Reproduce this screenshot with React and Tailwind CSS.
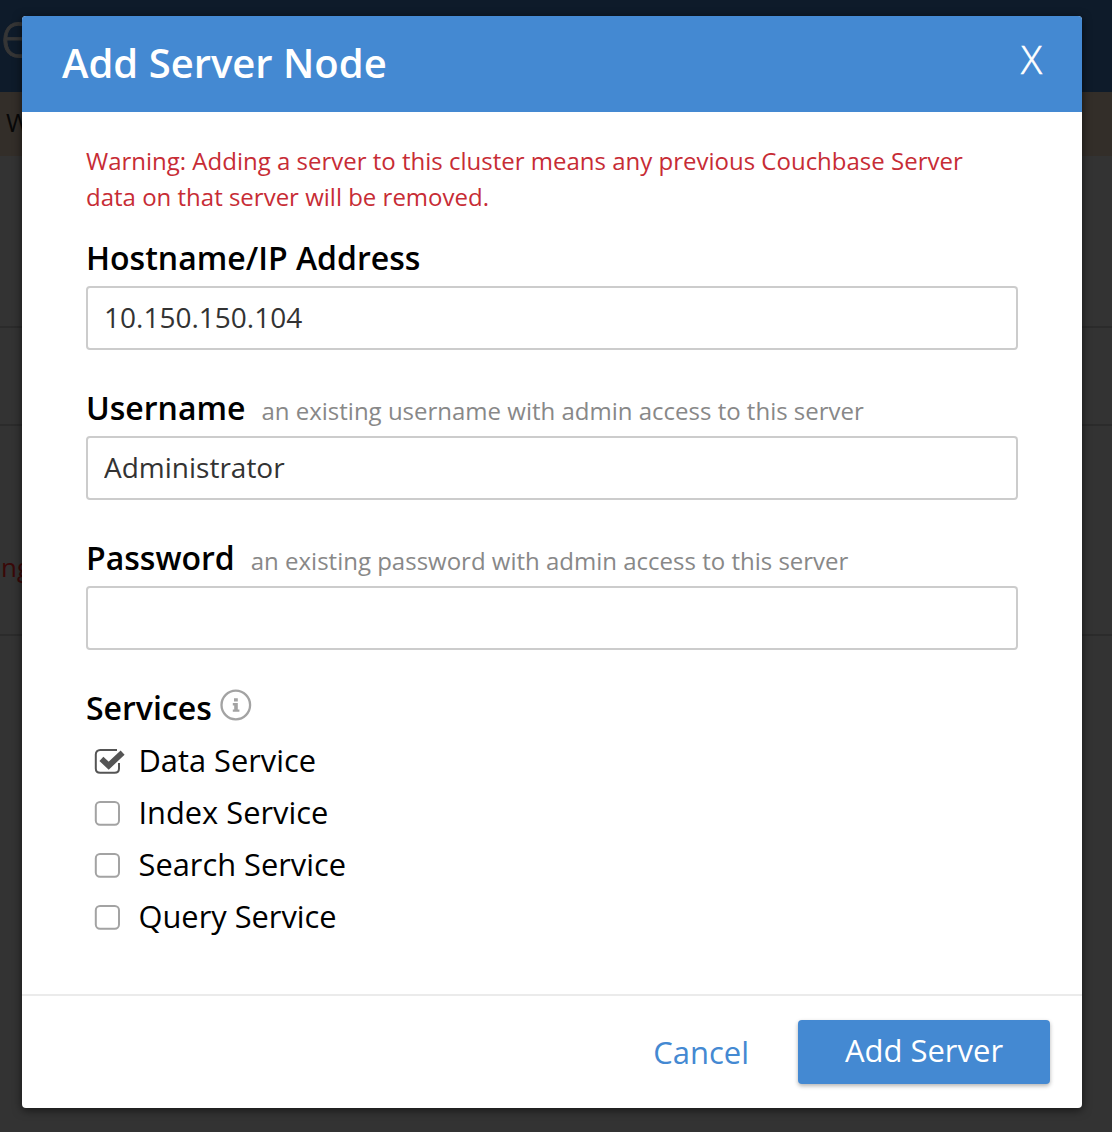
import React from 'react';

function Backdrop() {
  return (
    <div className="absolute inset-0 flex flex-col overflow-hidden bg-[#333333]" aria-hidden="true">
      <div className="h-[92px] shrink-0 bg-[#0e1b2a] text-[64px] leading-[65px] font-light text-[#363636] [-webkit-text-stroke:0.8px_#363636]">e</div>
      <div className="h-16 shrink-0 bg-[#332e29] pl-[6px] text-[26px] leading-[61px] text-[#080808]">W</div>
      <div className="h-[172px] shrink-0 border-b-2 border-[#2b2b2b]" />
      <div className="h-[98px] shrink-0 border-b-2 border-[#2b2b2b]" />
      <div className="h-[210px] shrink-0 border-b-2 border-[#2b2b2b] pt-[123px] pl-px text-[26px] leading-[36px] text-[#3a0808]">ng</div>
    </div>
  );
}

function Field({ label, hint, value, type = 'text' }) {
  return (
    <label className="block h-[150px]">
      <span className="flex h-[50px] items-baseline gap-4 leading-[44px]">
        <span className="text-[32px] font-semibold text-black">{label}</span>
        {hint && <span className="text-2xl leading-none text-[#888888]">{hint}</span>}
      </span>
      <input
        type={type}
        defaultValue={value}
        className="block h-16 w-full rounded-[4px] border-2 border-[#cccccc] bg-white px-4 pb-[3px] text-[28px] text-[#333333] outline-none"
      />
    </label>
  );
}

function InfoIcon() {
  return (
    <svg width="32" height="32" viewBox="0 0 32 32" fill="none" className="mt-[-6px]">
      <circle cx="15.8" cy="16" r="14.3" stroke="#a3a3a3" strokeWidth="2.3" />
      <path d="M14 9.2h3.8v3.3H14zM12.8 14h5v6.4h1.6v2.4h-6.6v-2.4h1.4v-4h-1.4z" fill="#a3a3a3" />
    </svg>
  );
}

function CheckIcon({ checked }) {
  return checked ? (
    <svg width="32" height="30" viewBox="0 0 32 30" fill="none">
      <path d="M24 3H7.2C4.5 3 2.8 4.8 2.8 7.4v14C2.8 24 4.5 25.7 7.2 25.7h14.4C24.2 25.7 26 24 26 21.4V16" stroke="#555555" strokeWidth="2" />
      <path d="M8.4 11.9l7.3 6.8L29.6 5.6" stroke="#555555" strokeWidth="5.8" />
    </svg>
  ) : (
    <svg width="32" height="30" viewBox="0 0 32 30" fill="none">
      <rect x="2.8" y="3" width="23.2" height="22.8" rx="4.2" stroke="#a3a3a3" strokeWidth="2" />
    </svg>
  );
}

const services = [
  { name: 'Data Service', checked: true },
  { name: 'Index Service' },
  { name: 'Search Service' },
  { name: 'Query Service' },
];

export default function App() {
  return (
    <div className="relative h-[1132px] w-[1112px] overflow-hidden px-[22px] pt-4 pr-[30px] font-['Open_Sans',sans-serif]">
      <Backdrop />
      <section className="relative flex h-[1092px] w-[1060px] flex-col overflow-hidden rounded-[4px] bg-white shadow-[0_2px_10px_rgba(0,0,0,0.6)]">
        <header className="flex h-24 shrink-0 items-start justify-between bg-[#4489d2] pl-10 pr-10 text-white">
          <h1 className="pt-[17px] text-[40px] leading-[60px] font-semibold">Add Server Node</h1>
          <button className="pt-[13px] text-[39px] leading-[60px] font-light [-webkit-text-stroke:0.6px_white]">X</button>
        </header>
        <div className="grow px-16 pt-[31px]">
          <p className="text-2xl leading-[36px] text-[#c72c35]">
            Warning: Adding a server to this cluster means any previous Couchbase Server
            <br />
            data on that server will be removed.
          </p>
          <div className="pt-[21px]">
            <Field label="Hostname/IP Address" value="10.150.150.104" />
            <Field label="Username" hint="an existing username with admin access to this server" value="Administrator" />
            <Field label="Password" hint="an existing password with admin access to this server" value="" type="password" />
          </div>
          <div className="flex h-[50px] gap-2">
            <h2 className="text-[32px] leading-[44px] font-semibold text-black">Services</h2>
            <div className="flex h-11 items-center"><InfoIcon /></div>
          </div>
          <ul className="pl-[7px]">
            {services.map((s) => (
              <li key={s.name} className="flex h-[52px] items-center text-[30.8px] text-black">
                <CheckIcon checked={s.checked} />
                <span className="pb-[4px] pl-[13.5px]">{s.name}</span>
              </li>
            ))}
          </ul>
        </div>
        <footer className="flex h-[114px] shrink-0 items-start justify-end gap-[49px] border-t-2 border-[#ebebeb] pt-6 pr-8 text-[31px]">
          <button className="h-16 text-[#4489d2]">Cancel</button>
          <button className="h-16 w-[252px] rounded-[4px] bg-[#4489d2] pb-[4px] text-white shadow-[0_2px_4px_rgba(0,0,0,0.3)]">Add Server</button>
        </footer>
      </section>
    </div>
  );
}
